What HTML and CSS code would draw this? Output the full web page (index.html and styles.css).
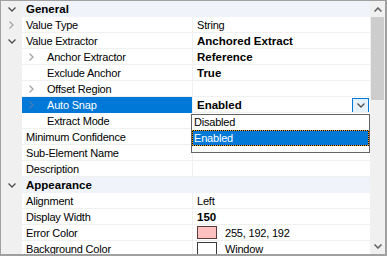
FILE: index.html
```html
<!DOCTYPE html>
<html lang="en">
<head>
    <meta charset="UTF-8">
    <meta name="viewport" content="width=device-width, initial-scale=1.0">
    <title>Properties</title>
    <link rel="stylesheet" href="styles.css">
</head>
<body>
    <div class="grid">
        <div class="list">
            <div class="row cat">
                <span class="gut"><svg class="dn dark" width="8" height="5"><polyline points="0.5,0.5 4,4 7.5,0.5"/></svg></span>
                <span class="name">General</span><span class="val"></span>
            </div>
            <div class="row">
                <span class="gut"><svg class="rt" width="5" height="8"><polyline points="0.5,0.5 4,4 0.5,7.5"/></svg></span>
                <span class="name">Value Type</span><span class="val">String</span>
            </div>
            <div class="row">
                <span class="gut"><svg class="dn dark" width="8" height="5"><polyline points="0.5,0.5 4,4 7.5,0.5"/></svg></span>
                <span class="name">Value Extractor</span><span class="val b">Anchored Extract</span>
            </div>
            <div class="row">
                <span class="gut"></span>
                <span class="name"><span class="sub"><svg class="rt" width="5" height="8"><polyline points="0.5,0.5 4,4 0.5,7.5"/></svg></span>Anchor Extractor</span><span class="val b">Reference</span>
            </div>
            <div class="row">
                <span class="gut"></span>
                <span class="name"><span class="sub"></span>Exclude Anchor</span><span class="val b">True</span>
            </div>
            <div class="row">
                <span class="gut"></span>
                <span class="name"><span class="sub"><svg class="rt" width="5" height="8"><polyline points="0.5,0.5 4,4 0.5,7.5"/></svg></span>Offset Region</span><span class="val"></span>
            </div>
            <div class="row sel">
                <span class="gut"></span>
                <span class="name"><span class="sub"><svg class="rt blue" width="5" height="8"><polyline points="0.5,0.5 4,4 0.5,7.5"/></svg></span>Auto Snap</span>
                <span class="val b edit">Enabled
                    <span class="ddbtn"><svg class="dn dark" width="8" height="5"><polyline points="0.5,0.5 4,4 7.5,0.5"/></svg></span>
                </span>
            </div>
            <div class="row">
                <span class="gut"></span>
                <span class="name"><span class="sub"></span>Extract Mode</span><span class="val"></span>
            </div>
            <div class="row">
                <span class="gut"></span>
                <span class="name">Minimum Confidence</span><span class="val"></span>
            </div>
            <div class="row">
                <span class="gut"></span>
                <span class="name">Sub-Element Name</span><span class="val"></span>
            </div>
            <div class="row">
                <span class="gut"></span>
                <span class="name">Description</span><span class="val"></span>
            </div>
            <div class="row cat">
                <span class="gut"><svg class="dn dark" width="8" height="5"><polyline points="0.5,0.5 4,4 7.5,0.5"/></svg></span>
                <span class="name">Appearance</span><span class="val"></span>
            </div>
            <div class="row">
                <span class="gut"></span>
                <span class="name">Alignment</span><span class="val">Left</span>
            </div>
            <div class="row">
                <span class="gut"></span>
                <span class="name">Display Width</span><span class="val b">150</span>
            </div>
            <div class="row">
                <span class="gut"></span>
                <span class="name">Error Color</span><span class="val"><span class="swatch pink"></span>255, 192, 192</span>
            </div>
            <div class="row">
                <span class="gut"></span>
                <span class="name">Background Color</span><span class="val"><span class="swatch"></span>Window</span>
            </div>

            <div class="dropdown">
                <div class="opt">Disabled</div>
                <div class="opt on"><span>Enabled</span></div>
            </div>
        </div>
        <div class="scrollbar">
            <div class="sbbtn"><svg class="up" width="8" height="5"><polyline points="0.5,4.5 4,1 7.5,4.5"/></svg></div>
            <div class="thumb"></div>
            <div class="track"></div>
            <div class="sbbtn"><svg class="dn" width="8" height="5"><polyline points="0.5,0.5 4,4 7.5,0.5"/></svg></div>
        </div>
    </div>
</body>
</html>
```
FILE: styles.css
```css
body {
    margin: 0;
    font-family: 'Liberation Sans', Arial, sans-serif;
    font-size: 11px;
    color: #000;
    background: #fff;
}
.grid {
    width: 387px;
    height: 256px;
    box-sizing: border-box;
    border: 1px solid #a0a0a0;
    border-right-width: 2px;
    border-bottom-width: 2px;
    display: flex;
    overflow: hidden;
}
.list {
    position: relative;
    flex: 1;
    background: #fff;
}
.row {
    display: grid;
    grid-template-columns: 21px 170px 1fr;
    height: 16px;
    line-height: 16px;
    letter-spacing: -0.2px;
}
.gut {
    background: #f0f0f0;
    display: flex;
    align-items: center;
    justify-content: center;
}
.name, .val {
    height: 15px;
    border-bottom: 1px solid #f0f0f0;
    white-space: nowrap;
    overflow: hidden;
}
.name {
    padding-left: 4px;
    display: flex;
    align-items: center;
}
.val {
    border-left: 1px solid #f0f0f0;
    padding-left: 4px;
    display: flex;
    align-items: center;
}
.b {
    font-weight: bold;
    font-size: 11.5px;
    letter-spacing: 0;
}
.sub {
    width: 21px;
    flex: none;
    display: flex;
    align-items: center;
    padding-left: 3px;
    box-sizing: border-box;
}
.cat .name, .cat .val {
    background: #f0f4fa;
    border-bottom-color: #f0f4fa;
}
.cat .name {
    font-weight: bold;
    font-size: 11.5px;
    letter-spacing: 0;
}
.cat .val {
    border-left-color: #f0f4fa;
}
.sel .name {
    background: #0078d7;
    color: #fff;
    border-bottom-color: #0078d7;
}
svg polyline {
    fill: none;
    stroke: #a6a6a6;
    stroke-width: 1.3;
}
svg.dark polyline {
    stroke: #505050;
}
svg.blue polyline {
    stroke: #4a7fb5;
}
.edit {
    position: relative;
}
.ddbtn {
    position: absolute;
    right: 1px;
    top: 1px;
    width: 15px;
    height: 13px;
    border: 1px solid #0078d7;
    background: #e5f1fb;
    display: flex;
    align-items: center;
    justify-content: center;
}
.swatch {
    width: 18px;
    height: 11px;
    border: 1px solid #3c3c3c;
    background: #fff;
    margin-right: 8px;
    flex: none;
}
.swatch.pink {
    background: #ffc0c0;
    border-color: #5a3a3a;
}
.dropdown {
    position: absolute;
    top: 113px;
    left: 190px;
    right: 0;
    height: 39px;
    box-sizing: border-box;
    border: 1px solid #646464;
    background: #fff;
    letter-spacing: -0.2px;
}
.opt {
    height: 15px;
    line-height: 15px;
    padding-left: 2px;
}
.opt.on {
    height: 16px;
    padding: 1px;
    box-sizing: border-box;
    background: repeating-conic-gradient(#000 0 25%, #f5a623 0 50%) 0 0 / 2px 2px;
}
.opt.on span {
    display: block;
    height: 14px;
    line-height: 14px;
    padding-left: 1px;
    background: #0078d7;
    color: #fff;
}
.scrollbar {
    width: 15px;
    background: #f0f0f0;
    display: flex;
    flex-direction: column;
}
.sbbtn {
    height: 16px;
    display: flex;
    align-items: center;
    justify-content: center;
}
.sbbtn polyline {
    stroke: #606060;
    stroke-width: 1.5;
}
.thumb {
    height: 83px;
    width: 13px;
    margin-left: 1px;
    background: #cdcdcd;
}
.track {
    flex: 1;
}
```
